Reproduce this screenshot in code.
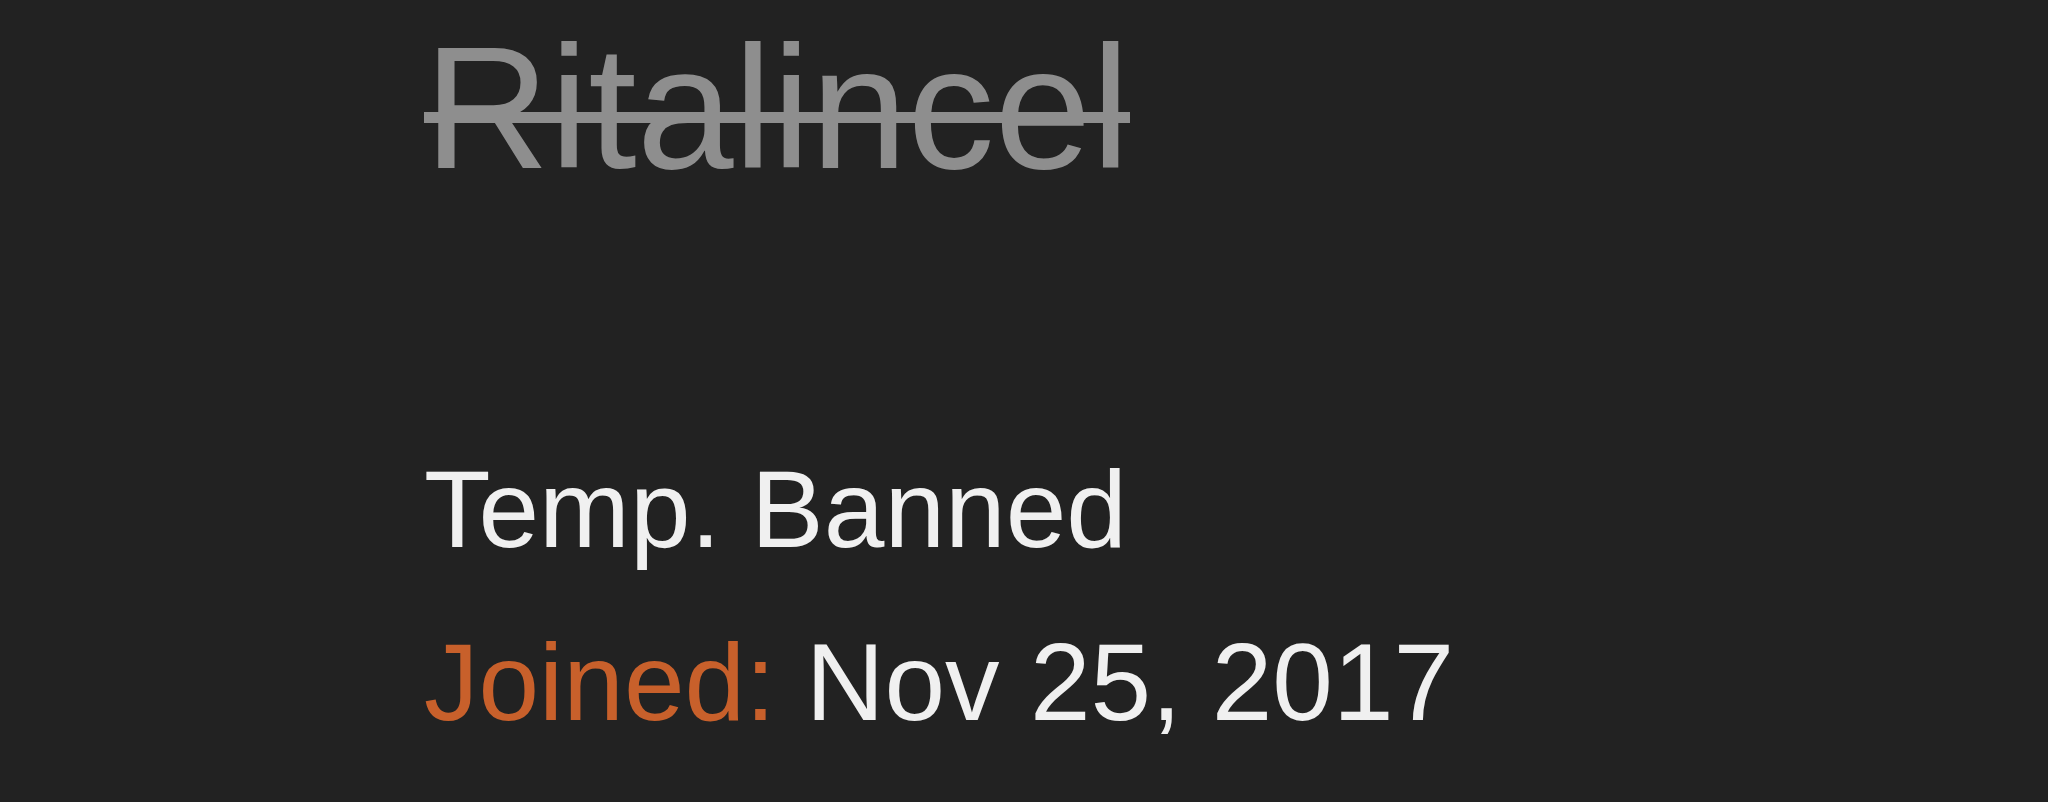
export default function App() {
  return (
    <div className="min-h-screen bg-[#222222] pl-[424px] pt-[21px] font-['Liberation_Sans',Arial,sans-serif]">
      <h1 className="relative inline-block text-[174px] leading-none text-[#8e8e8e]">
        Ritalincel
        {/* strike bar, sits a little lower than the font's own line-through */}
        <span className="absolute left-0 right-0 top-[91px] h-[11px] bg-[#8e8e8e]" />
      </h1>
      <div className="mt-[228px] text-[109px] leading-[173px] text-[#f0f0f0]">
        <p>Temp. Banned</p>
        <p>
          <span className="text-[#c8602b]">Joined:</span> Nov 25, 2017
        </p>
      </div>
    </div>
  );
}
